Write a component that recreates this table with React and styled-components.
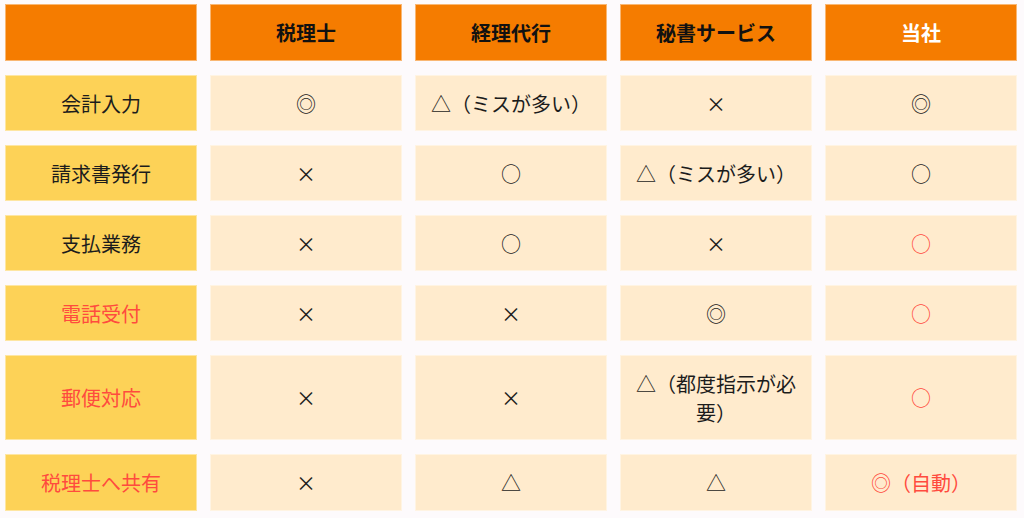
import styled, { createGlobalStyle } from "styled-components";

const GlobalStyle = createGlobalStyle`
   body {
      margin: 0;
      background: #fdfafc;
      font-family: "Noto Sans CJK JP", "Noto Sans", sans-serif;
   }
`;

const Grid = styled.div`
   display: grid;
   grid-template-columns: repeat(5, 192px);
   grid-template-rows: 57px repeat(4, 56px) 85px 57px;
   column-gap: 13px;
   row-gap: 14px;
   padding: 4px 0 0 5px;
`;

const Cell = styled.div`
   display: flex;
   align-items: center;
   justify-content: center;
   text-align: center;
   box-sizing: border-box;
   padding: 0 12px;
   font-size: 20px;
   line-height: 29px;
   border: 1px solid rgba(255, 255, 255, 0.45);
   color: ${({ $red }) => ($red ? "#ff4b3e" : "#1c1c1c")};
   background-color: ${({ $kind }) =>
      $kind === "head" ? "#f57c00" : $kind === "label" ? "#fdd257" : "#ffebcd"};
`;

const HeadCell = styled(Cell)`
   font-weight: 700;
   color: ${({ $white }) => ($white ? "#ffffff" : "#111111")};
`;

const heads = ["", "税理士", "経理代行", "秘書サービス", "当社"];

const rows = [
   { label: "会計入力", cells: ["◎", "△（ミスが多い）", "×", "◎"] },
   { label: "請求書発行", cells: ["×", "○", "△（ミスが多い）", "○"] },
   { label: "支払業務", cells: ["×", "○", "×", "○"], red: true },
   { label: "電話受付", labelRed: true, cells: ["×", "×", "◎", "○"], red: true },
   { label: "郵便対応", labelRed: true, cells: ["×", "×", "△（都度指示が必要）", "○"], red: true },
   { label: "税理士へ共有", labelRed: true, cells: ["×", "△", "△", "◎（自動）"], red: true },
];

const App = () => {
   return (
      <>
         <GlobalStyle />
         <Grid>
            {heads.map((h, i) => (
               <HeadCell key={i} $kind="head" $white={i === 4}>{h}</HeadCell>
            ))}
            {rows.map((r) => (
               <>
                  <Cell key={r.label} $kind="label" $red={r.labelRed}>{r.label}</Cell>
                  {r.cells.map((c, i) => (
                     <Cell key={r.label + i} $red={r.red && i === 3}>{c}</Cell>
                  ))}
               </>
            ))}
         </Grid>
      </>
   );
};

export default App;
